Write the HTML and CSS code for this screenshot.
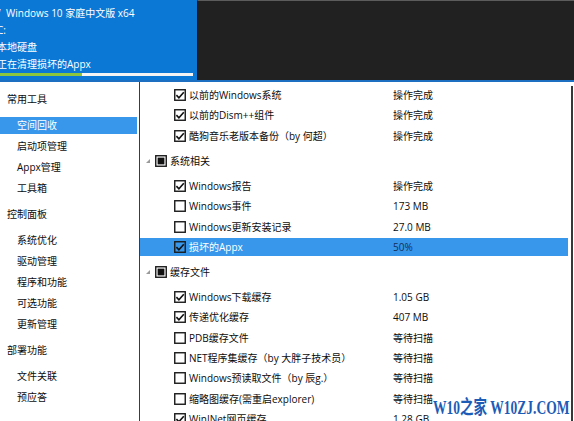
FILE: index.html
```html
<!DOCTYPE html>
<html lang="zh-CN">
<head>
<meta charset="utf-8">
<title>Dism++</title>
<link rel="stylesheet" href="styles.css">
</head>
<body>
<div class="app">
  <header class="top">
    <div class="info">
      <div class="lines">
        <div class="line"><span class="cut">/</span>Windows 10 家庭中文版 x64</div>
        <div class="line">C:</div>
        <div class="line">本地硬盘</div>
        <div class="line">正在清理损坏的Appx</div>
      </div>
      <div class="progress"><div class="fill" style="width:82px"></div></div>
    </div>
    <div class="dark"></div>
  </header>

  <div class="body">
    <nav class="side">
      <div class="head">常用工具</div>
      <div class="item selected">空间回收</div>
      <div class="item">启动项管理</div>
      <div class="item">Appx管理</div>
      <div class="item">工具箱</div>
      <div class="head">控制面板</div>
      <div class="item">系统优化</div>
      <div class="item">驱动管理</div>
      <div class="item">程序和功能</div>
      <div class="item">可选功能</div>
      <div class="item">更新管理</div>
      <div class="head">部署功能</div>
      <div class="item">文件关联</div>
      <div class="item">预应答</div>
    </nav>

    <main class="list">
      <div class="row">
        <div class="name"><svg class="cb" viewBox="0 0 12 12"><rect x="0.75" y="0.75" width="10.5" height="10.5"/><path d="M2.4 6.1 L4.9 8.7 L9.8 3.2"/></svg><span>以前的Windows系统</span></div>
        <div class="status">操作完成</div>
      </div>
      <div class="row">
        <div class="name"><svg class="cb" viewBox="0 0 12 12"><rect x="0.75" y="0.75" width="10.5" height="10.5"/><path d="M2.4 6.1 L4.9 8.7 L9.8 3.2"/></svg><span>以前的Dism++组件</span></div>
        <div class="status">操作完成</div>
      </div>
      <div class="row">
        <div class="name"><svg class="cb" viewBox="0 0 12 12"><rect x="0.75" y="0.75" width="10.5" height="10.5"/><path d="M2.4 6.1 L4.9 8.7 L9.8 3.2"/></svg><span>酷狗音乐老版本备份（by 何超）</span></div>
        <div class="status">操作完成</div>
      </div>

      <div class="group">
        <svg class="arrow" viewBox="0 0 4 4"><polygon points="4,0 4,4 0,4"/></svg>
        <svg class="cb" viewBox="0 0 12 12"><rect x="0.75" y="0.75" width="10.5" height="10.5"/><rect class="mix" x="2.6" y="2.6" width="6.8" height="6.8"/></svg>
        <span>系统相关</span>
      </div>
      <div class="row">
        <div class="name"><svg class="cb" viewBox="0 0 12 12"><rect x="0.75" y="0.75" width="10.5" height="10.5"/><path d="M2.4 6.1 L4.9 8.7 L9.8 3.2"/></svg><span>Windows报告</span></div>
        <div class="status">操作完成</div>
      </div>
      <div class="row">
        <div class="name"><svg class="cb" viewBox="0 0 12 12"><rect x="0.75" y="0.75" width="10.5" height="10.5"/></svg><span>Windows事件</span></div>
        <div class="status">173 MB</div>
      </div>
      <div class="row">
        <div class="name"><svg class="cb" viewBox="0 0 12 12"><rect x="0.75" y="0.75" width="10.5" height="10.5"/></svg><span>Windows更新安装记录</span></div>
        <div class="status">27.0 MB</div>
      </div>
      <div class="row selected">
        <div class="name"><svg class="cb" viewBox="0 0 12 12"><rect x="0.75" y="0.75" width="10.5" height="10.5"/><path d="M2.4 6.1 L4.9 8.7 L9.8 3.2"/></svg><span>损坏的Appx</span></div>
        <div class="status">50%</div>
      </div>

      <div class="group">
        <svg class="arrow" viewBox="0 0 4 4"><polygon points="4,0 4,4 0,4"/></svg>
        <svg class="cb" viewBox="0 0 12 12"><rect x="0.75" y="0.75" width="10.5" height="10.5"/><rect class="mix" x="2.6" y="2.6" width="6.8" height="6.8"/></svg>
        <span>缓存文件</span>
      </div>
      <div class="row">
        <div class="name"><svg class="cb" viewBox="0 0 12 12"><rect x="0.75" y="0.75" width="10.5" height="10.5"/><path d="M2.4 6.1 L4.9 8.7 L9.8 3.2"/></svg><span>Windows下载缓存</span></div>
        <div class="status">1.05 GB</div>
      </div>
      <div class="row">
        <div class="name"><svg class="cb" viewBox="0 0 12 12"><rect x="0.75" y="0.75" width="10.5" height="10.5"/><path d="M2.4 6.1 L4.9 8.7 L9.8 3.2"/></svg><span>传递优化缓存</span></div>
        <div class="status">407 MB</div>
      </div>
      <div class="row">
        <div class="name"><svg class="cb" viewBox="0 0 12 12"><rect x="0.75" y="0.75" width="10.5" height="10.5"/></svg><span>PDB缓存文件</span></div>
        <div class="status">等待扫描</div>
      </div>
      <div class="row">
        <div class="name"><svg class="cb" viewBox="0 0 12 12"><rect x="0.75" y="0.75" width="10.5" height="10.5"/></svg><span>NET程序集缓存（by 大胖子技术员）</span></div>
        <div class="status">等待扫描</div>
      </div>
      <div class="row">
        <div class="name"><svg class="cb" viewBox="0 0 12 12"><rect x="0.75" y="0.75" width="10.5" height="10.5"/></svg><span>Windows预读取文件（by 辰g.）</span></div>
        <div class="status">等待扫描</div>
      </div>
      <div class="row">
        <div class="name"><svg class="cb" viewBox="0 0 12 12"><rect x="0.75" y="0.75" width="10.5" height="10.5"/></svg><span>缩略图缓存(需重启explorer)</span></div>
        <div class="status">等待扫描</div>
      </div>
      <div class="row">
        <div class="name"><svg class="cb" viewBox="0 0 12 12"><rect x="0.75" y="0.75" width="10.5" height="10.5"/><path d="M2.4 6.1 L4.9 8.7 L9.8 3.2"/></svg><span>WinINet网页缓存</span></div>
        <div class="status">1.28 GB</div>
      </div>
    </main>
    <div class="scroll"></div>
  </div>

  <div class="watermark">W10之家 W10ZJ.COM</div>
</div>
</body>
</html>
```

FILE: styles.css
```css
* { box-sizing: border-box; }

html, body {
  margin: 0;
  padding: 0;
  width: 574px;
  height: 421px;
  overflow: hidden;
  background: #ffffff;
}

.app {
  position: relative;
  width: 574px;
  height: 421px;
  font-family: "Open Sans", "Noto Sans CJK SC", sans-serif;
  font-size: 10px;
  color: #0c0c0c;
  display: flex;
  flex-direction: column;
}

/* ---------- header ---------- */
.top {
  display: flex;
  height: 82px;
  flex: none;
  border-bottom: 2px solid #1d6fc2;
}

.info {
  width: 197px;
  background: #0b78d6;
  overflow: hidden;
  padding-top: 5px;
  color: #ffffff;
}

.lines {
  margin-left: -3px;
}

.line {
  height: 17px;
  line-height: 17px;
  white-space: nowrap;
}

.cut {
  display: inline-block;
  width: 9px;
}

.progress {
  width: 193px;
  height: 3px;
  background: #f4f4f4;
}

.fill {
  height: 3px;
  background: #8cc63f;
}

.dark {
  flex: 1;
  background: #212121;
  border-top: 1px solid #5c5c5c;
  border-left: 1px solid #161616;
}

/* ---------- body ---------- */
.body {
  flex: 1;
  display: flex;
  min-height: 0;
}

.side {
  width: 140px;
  flex: none;
  border-right: 1px solid #3c3c3c;
  display: flex;
  flex-direction: column;
  gap: 4px;
  padding-top: 3.5px;
  padding-right: 2px;
}

.side .head,
.side .item {
  height: 17px;
  line-height: 17px;
  white-space: nowrap;
}

.side .head {
  padding-left: 7px;
  margin: 5px 0;
}

.side .item {
  padding-left: 17px;
}

.side .item.selected {
  background: #3897ea;
  color: #ffffff;
}

/* ---------- list ---------- */
.list {
  flex: 1;
  display: flex;
  flex-direction: column;
  gap: 2px;
  padding-top: 3.9px;
  min-width: 0;
}

.row {
  height: 18.3px;
  flex: none;
  display: grid;
  grid-template-columns: 253px 1fr;
  align-items: center;
  white-space: nowrap;
}

.row.selected {
  background: #3897ea;
}

.row.selected .name span {
  color: #ffffff;
}

.row.selected .status {
  color: #10305a;
}

.row.selected .cb rect {
  fill: none;
}

.name {
  display: flex;
  align-items: center;
  gap: 3px;
  padding-left: 34px;
  line-height: 18px;
}

.status {
  line-height: 18px;
}

.cb {
  width: 12px;
  height: 12px;
  flex: none;
}

.cb rect {
  fill: #ffffff;
  stroke: #1a1a1a;
  stroke-width: 1.4;
}

.cb rect.mix {
  fill: #111111;
  stroke: none;
}

.cb path {
  fill: none;
  stroke: #111111;
  stroke-width: 1.6;
}

.group {
  height: 28px;
  flex: none;
  display: flex;
  align-items: center;
  padding-left: 6px;
  white-space: nowrap;
  line-height: 18px;
}

.arrow {
  width: 4px;
  height: 4px;
  margin-right: 5px;
  fill: #9a9a9a;
}

.group .cb {
  margin-right: 3px;
}

.scroll {
  width: 2px;
  flex: none;
  margin: 4px 1px 0 3px;
  background: #383838;
}

/* ---------- watermark ---------- */
.watermark {
  position: absolute;
  left: 433px;
  top: 396px;
  font-family: "Liberation Serif", "Noto Sans CJK SC", serif;
  font-weight: bold;
  font-size: 19px;
  line-height: 24px;
  color: #1c5cb6;
  white-space: nowrap;
  transform: scaleX(0.71);
  transform-origin: left top;
  text-shadow: 1px 0 0 #ffffff, -1px 0 0 #ffffff, 0 1px 0 #ffffff, 0 -1px 0 #ffffff;
}
```
